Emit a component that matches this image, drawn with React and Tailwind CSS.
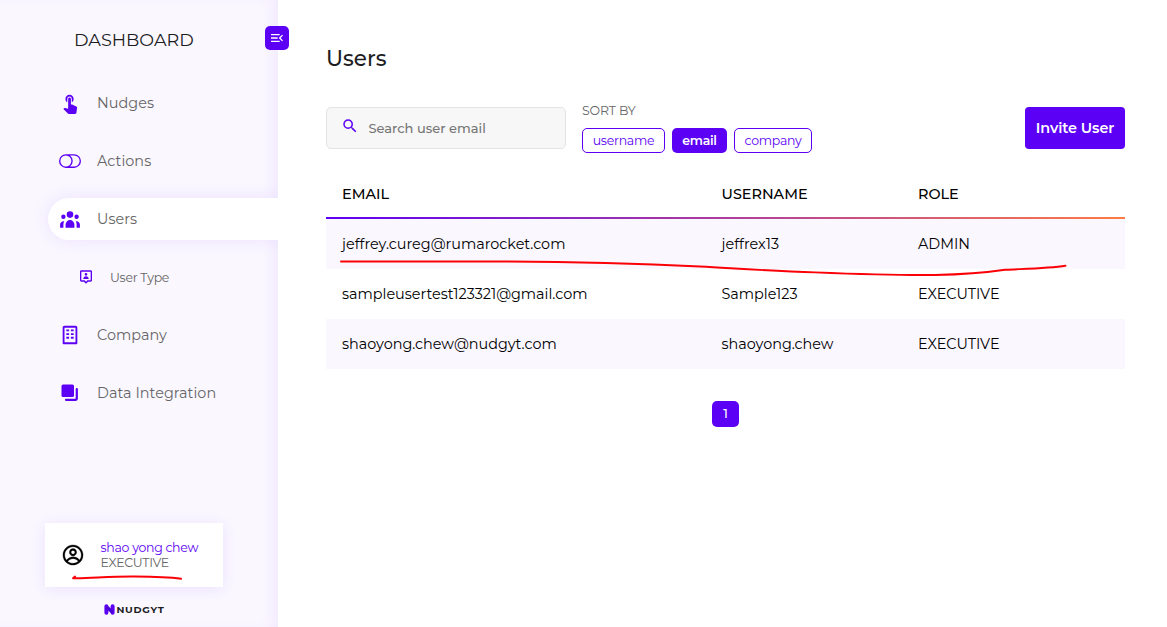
import React from "react";
import { BiBuilding, BiUserPin } from "react-icons/bi";
import { BsToggleOff } from "react-icons/bs";
import { CgProfile } from "react-icons/cg";
import { HiUserGroup } from "react-icons/hi";
import { MdMenuOpen, MdSearch, MdTouchApp } from "react-icons/md";

function StackedSquares() {
  return (
    <svg width="22" height="22" viewBox="0 0 22 22" fill="none">
      <rect x="2.5" y="2.5" width="12.5" height="12.5" rx="1.6" fill="currentColor" />
      <path d="M17.8 7v9.3a1.5 1.5 0 0 1-1.5 1.5H7" stroke="currentColor" strokeWidth="2.2" strokeLinecap="round" />
    </svg>
  );
}

const navItems = [
  { label: "Nudges", icon: <MdTouchApp size={22} /> },
  { label: "Actions", icon: <BsToggleOff size={22} /> },
  { label: "Users", icon: <HiUserGroup size={22} />, active: true },
  { label: "User Type", icon: <BiUserPin size={16} />, nested: true },
  { label: "Company", icon: <BiBuilding size={22} /> },
  { label: "Data Integration", icon: <StackedSquares /> },
];

function NavItem({ item }) {
  if (item.nested) {
    return (
      <li className="flex h-[42px] items-center pl-[30px] text-[12.5px] tracking-[-0.3px] text-[#666]">
        <span className="text-[#5c00f5]">{item.icon}</span>
        <span className="ml-4 pt-[3px]">{item.label}</span>
      </li>
    );
  }
  return (
    <li
      className={`flex h-[42px] items-center rounded-l-full pl-[11px] text-[14.4px] text-[#666] ${
        item.active ? "bg-white shadow-[0_0_18px_rgba(92,0,245,0.09)]" : ""
      }`}
    >
      <span className="text-[#5c00f5]">{item.icon}</span>
      <span className="ml-4 pt-0.5 tracking-[0.04px]">{item.label}</span>
    </li>
  );
}

function Sidebar() {
  return (
    <aside className="relative flex h-full w-[278px] shrink-0 flex-col overflow-x-clip bg-[#faf7ff] shadow-[inset_-10px_0_12px_-4px_#f2ebff]">
      <h2 className="pl-[74px] pt-[26px] text-[17.6px] leading-7 text-[#1d1d1f]">DASHBOARD</h2>
      <ul className="mt-7 flex flex-col gap-4 pl-12">
        {navItems.map((item) => (
          <NavItem key={item.label} item={item} />
        ))}
      </ul>
      <div className="relative ml-[45px] mt-auto flex h-16 w-[178px] items-center bg-white pl-[17px] shadow-[0_2px_14px_rgba(92,0,245,0.09)]">
        <CgProfile size={22} className="text-black" stroke="currentColor" strokeWidth="0.3" />
        <div className="ml-[16.5px] text-[12.5px] leading-[15px] tracking-[-0.28px]">
          <div className="text-[#5c00f5]">shao yong chew</div>
          <div className="text-[#666]">EXECUTIVE</div>
        </div>
        <svg className="absolute left-[25px] top-[50px]" width="114" height="9" viewBox="0 0 114 9" fill="none">
          <path
            d="M5 3.6 3 5.2c14 .6 36-1.9 62-1.6 20 .2 32 .4 46 2.2"
            stroke="#fb0007"
            strokeWidth="2"
            strokeLinecap="round"
            strokeLinejoin="round"
          />
        </svg>
      </div>
      <div className="mb-[11px] mt-4 flex h-[13px] items-center pl-[104px]">
        <svg width="11" height="11" viewBox="0 0 11 11" fill="none">
          <path d="M2.4 2.2v6.6M8.6 2.2v6.6" stroke="#5c00f5" strokeWidth="4" strokeLinecap="round" />
          <path d="M3.6 3.8 7.4 7.2" stroke="#4c00d8" strokeWidth="3.4" strokeLinecap="round" />
        </svg>
        <span className="ml-[1.5px] text-[9.8px] font-bold leading-none tracking-[0.7px] text-[#1c1c22]">NUDGYT</span>
      </div>
    </aside>
  );
}

const sortOptions = [
  { label: "username", style: "w-[83px] border border-[#5c00f5] pt-px text-[#5c00f5]" },
  { label: "email", style: "w-[55px] bg-[#5c00f5] pt-px font-semibold text-white" },
  { label: "company", style: "w-[78px] border border-[#5c00f5] pt-px text-[#5c00f5]" },
];

const users = [
  { email: "jeffrey.cureg@rumarocket.com", name: "jeffrex13", role: "ADMIN" },
  { email: "sampleusertest123321@gmail.com", name: "Sample123", role: "EXECUTIVE" },
  { email: "shaoyong.chew@nudgyt.com", name: "shaoyong.chew", role: "EXECUTIVE" },
];

const rowGrid = "grid grid-cols-[379.5px_196.5px_1fr] items-center pl-4 text-[14.4px] text-black";

export default function App() {
  return (
    <div className="relative flex h-[627px] w-[1167px] overflow-hidden bg-white font-['Montserrat','Inter',sans-serif]">
      <Sidebar />
      <button className="absolute left-[265px] top-[26px] flex h-6 w-6 items-center justify-center rounded-[5px] bg-[#5c00f5] text-white">
        <MdMenuOpen size={16} />
      </button>

      <main className="flex flex-1 flex-col pl-12 pr-[42px] pt-[42px]">
        <h1 className="text-[21.5px] font-[550] leading-8 text-[#1d1d1f]">Users</h1>

        <div className="mt-[33px] flex h-[46px] items-start">
          <div className="flex h-[42px] w-60 items-center rounded-[5px] border border-[#e3e3e3] bg-[#f7f7f7] pl-[14px]">
            <MdSearch size={18} className="-mt-1 text-[#5c00f5]" />
            <span className="ml-[9.5px] pt-0.5 text-[13px] font-medium text-[#757575]">Search user email</span>
          </div>
          <div className="ml-4">
            <div className="-mt-1 text-[12.5px] leading-4 tracking-[-0.1px] text-[#666]">SORT BY</div>
            <div className="mt-[9px] flex gap-[7px]">
              {sortOptions.map((option) => (
                <button
                  key={option.label}
                  className={`flex h-[25px] items-center justify-center rounded-[5px] text-[12.5px] tracking-[-0.25px] ${option.style}`}
                >
                  {option.label}
                </button>
              ))}
            </div>
          </div>
          <button className="ml-auto h-[42px] w-[100px] rounded-[4px] bg-[#5c00f5] pt-0.5 text-[14.4px] font-semibold tracking-[-0.08px] text-white">
            Invite User
          </button>
        </div>

        <section className="relative mt-4">
          <div className={`${rowGrid} h-12 pt-[3px] font-medium`}>
            <span>EMAIL</span>
            <span>USERNAME</span>
            <span>ROLE</span>
          </div>
          <div className="h-0.5 bg-[linear-gradient(90deg,#5c00f5,#ff7a45)]" />
          {users.map((user) => (
            <div key={user.email} className={`${rowGrid} h-[50px] pt-0.5 odd:bg-[#faf7ff]`}>
              <span>{user.email}</span>
              <span>{user.name}</span>
              <span>{user.role}</span>
            </div>
          ))}
          <svg className="absolute left-3 top-[89px]" width="732" height="20" viewBox="338 258 732 20" fill="none">
            <path
              d="M341 261.5H505C570 261.8 640 263.6 700 266.5C750 269.3 775 271 815 272.4C855 274 900 275.4 935 275C965 274.5 985 272.8 1005 269.8C1030 268.6 1050 268.2 1065.5 265.7"
              stroke="#fb0007"
              strokeWidth="1.9"
              strokeLinecap="round"
            />
          </svg>
        </section>

        <div className="mt-8 flex justify-center">
          <button className="h-[26px] w-[27px] rounded-[5px] bg-[#5c00f5] text-[12.5px] font-medium text-white">1</button>
        </div>
      </main>
    </div>
  );
}
